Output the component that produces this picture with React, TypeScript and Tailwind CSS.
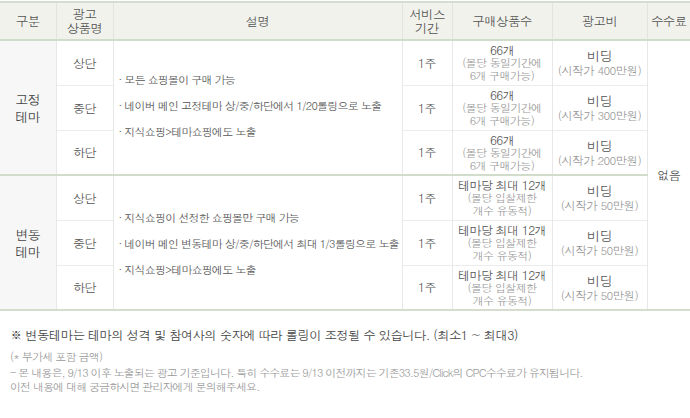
import React from 'react';

interface AdRow {
    position: string;
    period: string;
    qtyMain: string;
    qtySub: string[];
    priceSub: string;
}

interface AdGroup {
    name: string[];
    bullets: string[];
    rows: AdRow[];
}

const groups: AdGroup[] = [
    {
        name: ['고정', '테마'],
        bullets: [
            '모든 쇼핑몰이 구매 가능',
            '네이버 메인 고정테마 상/중/하단에서 1/20롤링으로 노출',
            '지식쇼핑>테마쇼핑에도 노출',
        ],
        rows: [
            { position: '상단', period: '1주', qtyMain: '66개', qtySub: ['(몰당 동일기간에', '6개 구매가능)'], priceSub: '(시작가 400만원)' },
            { position: '중단', period: '1주', qtyMain: '66개', qtySub: ['(몰당 동일기간에', '6개 구매가능)'], priceSub: '(시작가 300만원)' },
            { position: '하단', period: '1주', qtyMain: '66개', qtySub: ['(몰당 동일기간에', '6개 구매가능)'], priceSub: '(시작가 200만원)' },
        ],
    },
    {
        name: ['변동', '테마'],
        bullets: [
            '지식쇼핑이 선정한 쇼핑몰만 구매 가능',
            '네이버 메인 변동테마 상/중/하단에서 최대 1/3롤링으로 노출',
            '지식쇼핑>테마쇼핑에도 노출',
        ],
        rows: [
            { position: '상단', period: '1주', qtyMain: '테마당 최대 12개', qtySub: ['(몰당 입찰제한', '개수 유동적)'], priceSub: '(시작가 50만원)' },
            { position: '중단', period: '1주', qtyMain: '테마당 최대 12개', qtySub: ['(몰당 입찰제한', '개수 유동적)'], priceSub: '(시작가 50만원)' },
            { position: '하단', period: '1주', qtyMain: '테마당 최대 12개', qtySub: ['(몰당 입찰제한', '개수 유동적)'], priceSub: '(시작가 50만원)' },
        ],
    },
];

const font = "font-['Dotum','Noto_Sans_CJK_KR',sans-serif]";

const App: React.FC = () => {
    return (
        <div className={`w-[690px] h-[418px] bg-white text-[#555] ${font} tracking-[-0.6px]`}>
            <table className="w-[690px] table-fixed border-collapse mt-px border-t-2 border-t-[#d6ddcf]">
                <colgroup>
                    <col className="w-[56px]" />
                    <col className="w-[57px]" />
                    <col className="w-[289px]" />
                    <col className="w-[50px]" />
                    <col className="w-[100px]" />
                    <col className="w-[95px]" />
                    <col className="w-[43px]" />
                </colgroup>
                <thead>
                    <tr className="h-[38px] bg-[#f1f2ec] text-[12.5px] leading-[14px] text-[#555]">
                        <th className="font-normal border-r border-[#e3e5dc]">구분</th>
                        <th className="font-normal border-r border-[#e3e5dc]">광고<br />상품명</th>
                        <th className="font-normal border-r border-[#e3e5dc]">설명</th>
                        <th className="font-normal border-r border-[#e3e5dc]">서비스<br />기간</th>
                        <th className="font-normal border-r border-[#e3e5dc]">구매상품수</th>
                        <th className="font-normal border-r border-[#e3e5dc]">광고비</th>
                        <th className="font-normal">수수료</th>
                    </tr>
                </thead>
                <tbody className="text-[12px]">
                    {groups.map((group, gi) =>
                        group.rows.map((row, ri) => (
                            <tr
                                key={`${gi}-${ri}`}
                                className={`h-[45px] ${ri === 0 ? 'border-t-2 border-t-[#d2dccb]' : 'border-t border-t-[#ececec]'}`}
                            >
                                {ri === 0 && (
                                    <td rowSpan={3} className="bg-[#f7f7f7] text-center text-[13px] leading-[17px] text-[#444] border-r border-[#e8e8e8]">
                                        {group.name[0]}<br />{group.name[1]}
                                    </td>
                                )}
                                <td className="text-center text-[#555] border-r border-[#e8e8e8]">{row.position}</td>
                                {ri === 0 && (
                                    <td rowSpan={3} className="align-middle pl-[5px] border-r border-[#e8e8e8]">
                                        <div className={`flex flex-col gap-[13px] text-[11px] tracking-[-0.8px] ${gi === 0 ? 'pb-[4px]' : 'pt-[2px]'}`}>
                                            {group.bullets.map(b => (
                                                <div key={b} className="leading-[13px] whitespace-nowrap">
                                                    <span className="pr-[3px]">·</span>{b}
                                                </div>
                                            ))}
                                        </div>
                                    </td>
                                )}
                                <td className="text-center text-[#555] border-r border-[#e8e8e8]">{row.period}</td>
                                <td className="text-center border-r border-[#e8e8e8]">
                                    <div className="text-[12px] leading-[13px] text-[#555]">{row.qtyMain}</div>
                                    {row.qtySub.map(s => (
                                        <div key={s} className="text-[11px] leading-[13px] text-[#999]">{s}</div>
                                    ))}
                                </td>
                                <td className="text-center border-r border-[#e8e8e8]">
                                    <div className="text-[13px] leading-[15px] text-[#555]">비딩</div>
                                    <div className="text-[11.5px] leading-[14px] text-[#999]">{row.priceSub}</div>
                                </td>
                                {gi === 0 && ri === 0 && (
                                    <td rowSpan={6} className="text-center text-[#555] bg-white">없음</td>
                                )}
                            </tr>
                        ))
                    )}
                    <tr className="border-t-2 border-t-[#d6ddcf]"><td colSpan={7}></td></tr>
                </tbody>
            </table>

            <div className="pl-[10px] pt-[15px]">
                <p className="text-[12.5px] text-[#444] leading-[18px] tracking-[-0.7px]">
                    ※ 변동테마는 테마의 성격 및 참여사의 숫자에 따라 롤링이 조정될 수 있습니다. (최소1 ~ 최대3)
                </p>
                <p className="mt-[6px] text-[11px] leading-[14px] text-[#999] tracking-[-0.8px]">(* 부가세 포함 금액)</p>
                <p className="mt-[2px] text-[11px] leading-[14px] text-[#999] tracking-[-0.9px]">
                    - 본 내용은, 9/13 이후 노출되는 광고 기준입니다. 특히 수수료는 9/13 이전까지는 기존33.5원/Click의 CPC수수료가 유지됩니다.
                </p>
                <p className="text-[11px] leading-[14px] text-[#999] tracking-[-0.9px]">이전 내용에 대해 궁금하시면 관리자에게 문의해주세요.</p>
            </div>
        </div>
    );
};

export default App;
